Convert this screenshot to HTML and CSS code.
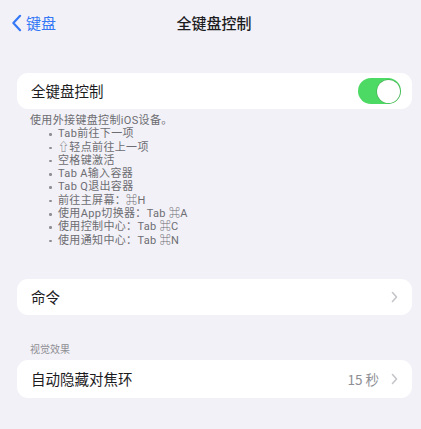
FILE: index.html
```html
<!DOCTYPE html>
<html lang="zh-CN">
<head>
<meta charset="utf-8">
<link rel="stylesheet" href="styles.css">
</head>
<body>
<div class="page">
  <header class="nav">
    <a class="back">
      <svg class="back-icon" viewBox="0 0 12 20" width="11" height="18"><path d="M10 2 L2.5 10 L10 18" fill="none" stroke="#3478f6" stroke-width="2.4" stroke-linecap="round" stroke-linejoin="round"/></svg>
      <span>键盘</span>
    </a>
    <h1 class="title">全键盘控制</h1>
  </header>

  <section class="card first">
    <div class="row">
      <span class="label">全键盘控制</span>
      <span class="toggle"><span class="knob"></span></span>
    </div>
  </section>
  <div class="footer">
    <p>使用外接键盘控制iOS设备。</p>
    <ul>
      <li>Tab前往下一项</li>
      <li>⇧轻点前往上一项</li>
      <li>空格键激活</li>
      <li>Tab A输入容器</li>
      <li>Tab Q退出容器</li>
      <li>前往主屏幕：⌘H</li>
      <li>使用App切换器：Tab ⌘A</li>
      <li>使用控制中心：Tab ⌘C</li>
      <li>使用通知中心：Tab ⌘N</li>
    </ul>
  </div>

  <section class="card second">
    <div class="row">
      <span class="label">命令</span>
      <svg class="chev" viewBox="0 0 7 12" width="7" height="12"><path d="M1.5 1.5 L5.5 6 L1.5 10.5" fill="none" stroke="#c5c5c9" stroke-width="1.6" stroke-linecap="round" stroke-linejoin="round"/></svg>
    </div>
  </section>

  <div class="header">视觉效果</div>
  <section class="card third">
    <div class="row">
      <span class="label">自动隐藏对焦环</span>
      <span class="value">15 秒</span>
      <svg class="chev" viewBox="0 0 7 12" width="7" height="12"><path d="M1.5 1.5 L5.5 6 L1.5 10.5" fill="none" stroke="#c5c5c9" stroke-width="1.6" stroke-linecap="round" stroke-linejoin="round"/></svg>
    </div>
  </section>
</div>
</body>
</html>
```
FILE: styles.css
```css
html, body {
  margin: 0;
  padding: 0;
  background: #f2f1f7;
}
body {
  font-family: "Noto Sans CJK SC", "Noto Sans", sans-serif;
  color: #1c1c1e;
  width: 421px;
  height: 429px;
  overflow: hidden;
}
.page {
  display: flex;
  flex-direction: column;
}
.nav {
  height: 46px;
  display: flex;
  align-items: center;
  justify-content: center;
  position: relative;
}
.back {
  position: absolute;
  left: 11px;
  top: 13px;
  display: flex;
  align-items: center;
  gap: 4px;
  color: #3478f6;
  font-size: 15px;
  line-height: 20px;
}
.back-icon { display: block; }
.title {
  margin: 0;
  font-size: 15px;
  font-weight: 500;
  line-height: 20px;
  color: #1c1c1e;
  padding-left: 7px;
}
.card {
  background: #ffffff;
  border-radius: 11px;
  margin: 0 9px 0 17px;
}
.card.first { margin-top: 27px; }
.row {
  height: 36px;
  display: flex;
  align-items: center;
  padding: 0 12px 0 14px;
}
.card.third .row { height: 38px; }
.label {
  flex: 1;
  font-size: 14.5px;
  line-height: 20px;
}
.toggle {
  width: 43px;
  height: 26px;
  border-radius: 13px;
  background: #4cd964;
  position: relative;
  margin-right: -1px;
}
.knob {
  position: absolute;
  right: 1.5px;
  top: 1.5px;
  width: 23px;
  height: 23px;
  border-radius: 50%;
  background: #fff;
  box-shadow: 0 0 0 0.6px rgba(60, 120, 60, 0.5);
}
.chev { display: block; margin-right: 2px; }
.value {
  font-size: 13.5px;
  color: #8e8e93;
  margin-right: 12px;
}
.footer {
  padding: 5px 0 0 30px;
  font-family: "Roboto", "Noto Sans CJK SC", sans-serif;
  font-size: 11px;
  line-height: 13.3px;
  letter-spacing: 0.35px;
  color: #6d6d72;
}
.footer p { margin: 0; }
.footer ul {
  margin: 0;
  padding: 0 0 0 28px;
  list-style: none;
}
.footer li { position: relative; }
.footer li::before {
  content: "";
  position: absolute;
  left: -9px;
  top: 6px;
  width: 2.5px;
  height: 2.5px;
  border-radius: 50%;
  background: #8e8e93;
}
.card.second { margin-top: 32px; }
.header {
  margin-top: 28px;
  padding-left: 30px;
  font-family: "Roboto", "Noto Sans CJK SC", sans-serif;
  font-size: 10px;
  line-height: 14px;
  color: #8e8e93;
  margin-bottom: 3px;
}
```
